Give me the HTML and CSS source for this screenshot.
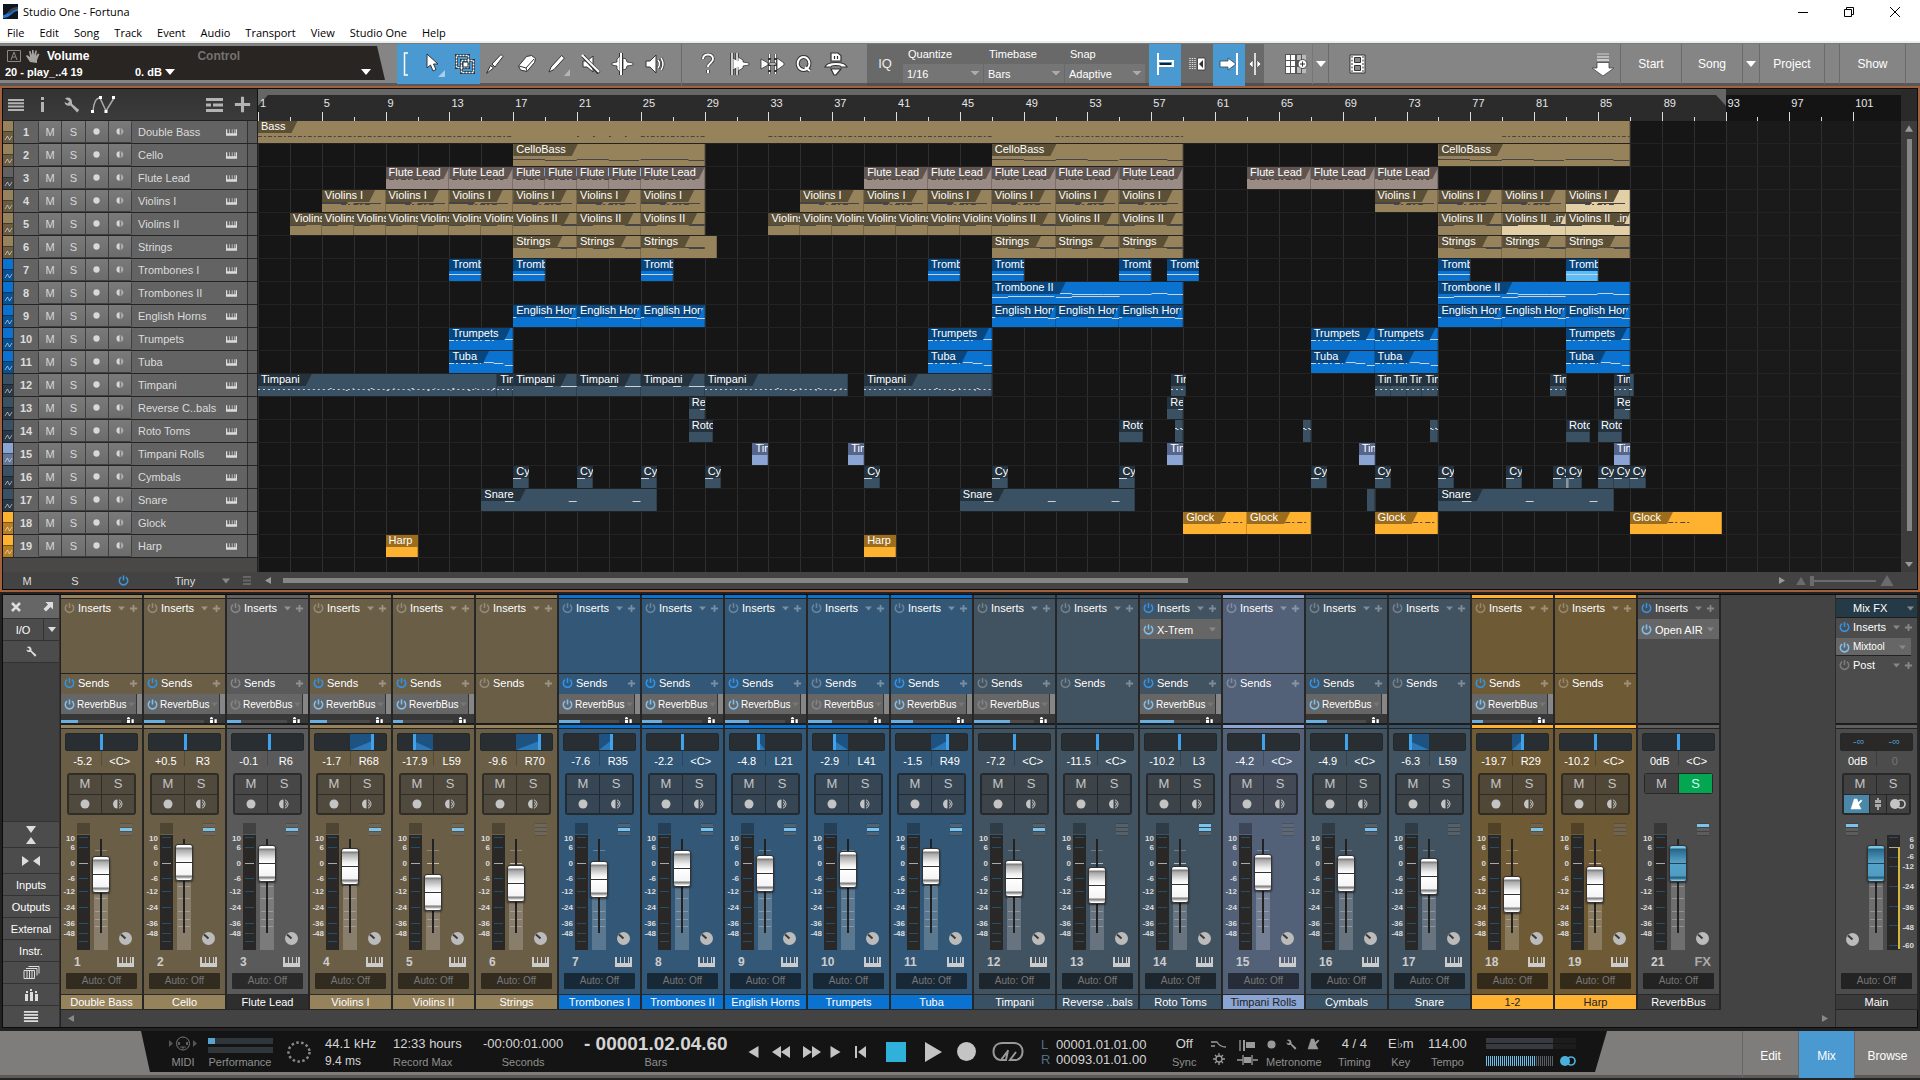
FILE: index.html
```html
<!DOCTYPE html>
<html lang="en">
<head>
<meta charset="utf-8">
<title>Studio One - Fortuna</title>
<link rel="stylesheet" href="styles.css">
</head>
<body>
<svg class="defs" aria-hidden="true">
  <symbol id="power" viewBox="0 0 12 12"><path d="M3.4 2.4a4.6 4.6 0 1 0 5.2 0M6 .5v5.5" fill="none" stroke="currentColor" stroke-width="1.7"/></symbol>
  <symbol id="plus" viewBox="0 0 10 10"><path d="M5 1v8M1 5h8" stroke="currentColor" stroke-width="2"/></symbol>
  <symbol id="down" viewBox="0 0 10 6"><path d="M0 0h10L5 6z" fill="currentColor"/></symbol>
  <symbol id="up" viewBox="0 0 12 10"><path d="M6 0l6 10H0z" fill="currentColor"/></symbol>
  <symbol id="left" viewBox="0 0 10 12"><path d="M10 0v12L0 6z" fill="currentColor"/></symbol>
  <symbol id="right" viewBox="0 0 10 12"><path d="M0 0v12l10-6z" fill="currentColor"/></symbol>
  <symbol id="keys" viewBox="0 0 17 10"><path d="M0 0h2v6h3V0h1v6h3V0h1v6h3V0h1v6h1V0h2v10H0z" fill="currentColor"/></symbol>
  <symbol id="dot" viewBox="0 0 10 10"><circle cx="5" cy="5" r="4.5" fill="currentColor"/></symbol>
  <symbol id="monitor" viewBox="0 0 10 10"><path d="M4.5.5a4.5 4.5 0 0 0 0 9z" fill="currentColor"/><path d="M6 .8a4.4 4.4 0 0 1 0 8.4M6 2.8a2.4 2.4 0 0 1 0 4.4" fill="none" stroke="currentColor"/></symbol>
  <symbol id="wrench" viewBox="0 0 16 16"><path d="M1 1.5C4-.5 8 1 8 5c0 1 0 1.200.2 2l7 6-2 2.500-6.700-7C3 9.500.8 7.500.5 5l3 1.500L5.500 4.500z" fill="currentColor"/></symbol>
  <symbol id="rows" viewBox="0 0 16 12"><path d="M0 0h16v2H0zM0 3.300h16v2H0zM0 6.600h16v2H0zM0 10h16v2H0z" fill="currentColor"/></symbol>
  <symbol id="knob" viewBox="0 0 13 13"><circle cx="6.500" cy="6.500" r="6.500" fill="currentColor"/><path d="M6.500 6.500L2 2.500" stroke="#3d3a36" stroke-width="2"/></symbol>
  <symbol id="zig" viewBox="0 0 9 6"><path d="M1 5L3.500 1l2 4L8 1" fill="none" stroke="currentColor"/></symbol>
  <symbol id="send" viewBox="0 0 10 8"><path d="M2 0h2v1h1v2H1V1h1zM1 4h4v4H1zM7 3h3v5H7z" fill="currentColor"/></symbol>
  <symbol id="metro" viewBox="0 0 14 13"><path d="M4.500 1h3L9 5l3-3 1 1-3.500 4L12 12H1zM4.500 5l4 4" fill="currentColor" stroke="currentColor" stroke-width=".5"/></symbol>
  <symbol id="stereo" viewBox="0 0 16 10"><circle cx="5" cy="5" r="5" fill="currentColor"/><circle cx="11" cy="5" r="4" fill="none" stroke="currentColor" stroke-width="1.700"/></symbol>
</svg>

<header class="window">
  <div class="title">
    <svg class="app-icon" width="15" height="15" viewBox="0 0 15 15"><path fill="#10161d" d="M0 0h15v15H0z"/><path d="M0 11c6 0 5-7 15-7v3C9 7 8 14 0 14z" fill="#2476d2"/><path d="M5 8c3-4 6-5 10-5v2C10 6 8 9 6 10z" fill="#39424d"/></svg>
    <h1>Studio One - Fortuna</h1>
    <div class="window-buttons">
      <button aria-label="Minimize"><svg width="12" height="12" viewBox="0 0 12 12"><path d="M1 6.500h10" stroke="#000"/></svg></button>
      <button aria-label="Restore"><svg width="12" height="12" viewBox="0 0 12 12"><path d="M1.500 3.500h7v7h-7zM3.500 3V1.500h7v7H9" fill="none" stroke="#000"/></svg></button>
      <button aria-label="Close"><svg width="12" height="12" viewBox="0 0 12 12"><path d="M1 1l10 10M11 1L1 11" stroke="#000"/></svg></button>
    </div>
  </div>
  <nav class="menu"><a href="#file">File</a><a href="#edit">Edit</a><a href="#song">Song</a><a href="#track">Track</a><a href="#event">Event</a><a href="#audio">Audio</a><a href="#transport">Transport</a><a href="#view">View</a><a href="#one">Studio One</a><a href="#help">Help</a></nav>
</header>

<section class="toolbar">
  <div class="param">
    <div class="param-line">
      <svg width="14" height="12" viewBox="0 0 14 12"><path d="M.5.500h13v11H.5z" fill="none" stroke="#8c8986"/><path d="M4 10l3-8 3 8M5 7h4" fill="none" stroke="#8c8986"/></svg>
      <svg width="14" height="13" viewBox="0 0 14 13"><path d="M4 12L0 6l1-1 3 2-1-6h1.500L6 5V0h1.500L8 5l1.500-4.500H11L10 6l2-2.500 1.500.5L11 10v3z" fill="#a5a29f"/></svg>
      <b>Volume</b><b class="control">Control</b>
    </div>
    <div class="param-line second"><b>20 - play_..4 19</b><b class="db">0. dB</b><svg width="10" height="6"><use href="#down"/></svg><svg class="end" width="10" height="6"><use href="#down"/></svg></div>
  </div>
  <div class="tools">
    <button class="lit bracket" aria-label="Group"><svg width="6" height="24" viewBox="0 0 6 24"><path d="M5 1H1.500v22H5" fill="none" stroke="#fff" stroke-width="1.500"/></svg></button>
    <button class="lit arrow" aria-label="Arrow"><svg width="22" height="26" viewBox="0 0 22 26"><path d="M4 3v14l3.500-3 2.500 6 3-1.500-2.500-5.500H15z" fill="#fff" stroke="#333"/><path d="M22 19v7h-7z" fill="#a9cdea"/></svg></button>
    <button class="lit wide" aria-label="Range"><svg width="20" height="20" viewBox="0 0 20 20"><path d="M1.500 1.500h12v12h-12zM6.500 6.500h12v12h-12z" fill="none" stroke="#234" stroke-width="3"/><path d="M1.500 1.500h12v12h-12zM6.500 6.500h12v12h-12z" fill="none" stroke="#fff" stroke-width="1.500" stroke-dasharray="2 1"/><path d="M8 8h5v5H8z" fill="#fff" stroke="#234"/></svg></button>
    <button aria-label="Paint"><svg width="20" height="22" viewBox="0 0 20 22"><path d="M1.500 20.500l4-8 3 2.500zM7 11L16 1.500l2 2L10 14z" fill="#fff" stroke="#333"/></svg></button>
    <button aria-label="Eraser"><svg width="20" height="20" viewBox="0 0 20 20"><path d="M1.500 12l8-9.500 5-1 4 3-1 4-7.500 9-6.500-1.500zM2 12l7 2 1 3M9 14l8-9" fill="#fff" stroke="#333"/></svg></button>
    <button aria-label="Pencil"><svg width="24" height="24" viewBox="0 0 24 24"><path d="M2 20l2-5L14.500 3.500l3 2.500L7 17.500z" fill="#fff" stroke="#333"/><path d="M23 17v7h-6z" fill="#b5b5b5"/></svg></button>
    <button aria-label="Mute"><svg width="20" height="20" viewBox="0 0 20 20"><path d="M2 7h4l6-5v16l-6-5H2z" fill="#fff" stroke="#333"/><path d="M2 2l16 17" stroke="#333" stroke-width="4"/><path d="M1 1l17 17" stroke="#fff" stroke-width="2"/></svg></button>
    <button aria-label="Bend"><svg width="24" height="24" viewBox="0 0 24 24"><path d="M10 1v22" stroke="#333" stroke-width="4"/><path d="M1 11l5-1V7l3-3v16l-3-3v-3l-5-1zM12 6l3 1 1 3 6 1v2l-6 1-1 3-3 1z" fill="#fff" stroke="#333" stroke-width=".8"/><path d="M10 1v22" stroke="#fff" stroke-width="2"/></svg></button>
    <button aria-label="Listen"><svg width="21" height="20" viewBox="0 0 21 20"><path d="M1 7h4l6-6v18l-6-6H1z" fill="#fff" stroke="#333"/><path d="M13 6q3 4 0 8M16 4q4 6 0 12" fill="none" stroke="#333" stroke-width="3"/><path d="M13 6q3 4 0 8M16 4q4 6 0 12" fill="none" stroke="#fff" stroke-width="1.500"/></svg></button>
  </div>
  <div class="tools second-tools">
    <button aria-label="Help"><svg width="16" height="22" viewBox="0 0 16 22"><path d="M3 6c0-6 10-6 10 0 0 4-5 4-5 8M8 17v3" fill="none" stroke="#333" stroke-width="3.500"/><path d="M3 6c0-6 10-6 10 0 0 4-5 4-5 8M8 17v3" fill="none" stroke="#fff" stroke-width="2"/></svg></button>
    <button aria-label="Transients"><svg width="20" height="24" viewBox="0 0 20 24"><path d="M2 1v22M7 1v22" stroke="#333" stroke-width="3.500"/><path d="M3 6l5 3V5l5 3v2l6 1v2l-6 1v2l-5 3v-4l-5 3z" fill="#fff" stroke="#333" stroke-width=".8"/><path d="M2 1v22M7 1v22" stroke="#fff" stroke-width="1.500"/></svg></button>
    <button aria-label="Split"><svg width="25" height="22" viewBox="0 0 25 22"><path d="M9.500 1v20M15.500 1v20" stroke="#333" stroke-width="3"/><path d="M9.500 1v20M15.500 1v20" stroke="#fff" stroke-dasharray="4 2" stroke-width="1.500"/><path d="M1 6l7 4v2l-7 4zM9 10h7v2H9zM17 5l7 5v2l-7 5z" fill="#fff" stroke="#333" stroke-width=".8"/></svg></button>
    <button aria-label="Quantize tool"><svg width="18" height="20" viewBox="0 0 18 20"><path d="M8.500 3a5.800 6.500 0 1 0 .1 0M10 13l5 4" fill="none" stroke="#333" stroke-width="4"/><path d="M8.500 3a5.800 6.500 0 1 0 .1 0M10 13l5 4" fill="none" stroke="#fff" stroke-width="2"/></svg></button>
    <button aria-label="Macro"><svg width="24" height="24" viewBox="0 0 24 24"><path d="M7 1h7l3 2.500V9H7zM10.500 4v3M13.500 4v3M1 15c2-6 20-6 22 0h-6c0-2-10-2-10 0zM7 17h10l-5 6h-2z" fill="#fff" stroke="#333" stroke-width="1.200"/></svg></button>
  </div>
  <div class="quantize">
    <button class="iq">IQ</button>
    <div class="field"><label for="q">Quantize</label><select id="q"><option>1/16</option></select></div>
    <div class="field"><label for="tb">Timebase</label><select id="tb"><option>Bars</option></select></div>
    <div class="field"><label for="sn">Snap</label><select id="sn"><option>Adaptive</option></select></div>
    <button class="lit sq first" aria-label="Snap to grid"><svg width="18" height="24" viewBox="0 0 18 24"><path d="M2 1v22M2 9h15v5H2" fill="none" stroke="#fff" stroke-width="2"/><path d="M4 11h11v2H4z" fill="#123"/></svg></button>
    <button class="sq" aria-label="Autoscroll"><svg width="18" height="14" viewBox="0 0 18 14"><path d="M2 1v12M4.500 1v12M7 1v12" stroke="#ddd" stroke-dasharray="1 1" stroke-width="1.500"/><path d="M9.500 1H17v12H9.500z" fill="#fff" stroke="#333" stroke-width=".8"/><path d="M15 3v8l-4-4z" fill="#333"/></svg></button>
    <button class="lit sq" aria-label="Follow"><svg width="20" height="24" viewBox="0 0 20 24"><path d="M1 9h8V6l8 6-8 6v-3H1z" fill="#fff" stroke="#345" stroke-width=".8"/><path d="M18 1v22" stroke="#fff" stroke-width="2"/></svg></button>
    <button class="cursor" aria-label="Cursor"><svg width="14" height="24" viewBox="0 0 14 24"><path d="M7 1v22" stroke="#fff" stroke-width="1.500"/><path d="M5 8v8l-4-4zM9 8v8l4-4z" fill="#fff" stroke="#333" stroke-width=".5"/></svg></button>
  </div>
  <div class="views">
    <button aria-label="Add grid"><svg width="23" height="20" viewBox="0 0 23 20"><path d="M0 0h17v20H0z" fill="#555"/><path d="M1 1h4v5H1zM6 1h4v5H6zM1 7h4v5H1zM6 7h4v5H6zM1 13h4v6H1zM6 13h4v6H6z" fill="#fff"/><path d="M12 1h4v5h-4zM17 1h4v5h-4zM12 13h4v6h-4zM17 15h4v4h-4z" fill="#bbb"/><circle cx="17.500" cy="10" r="4.500" fill="#fff" stroke="#444"/><path d="M17.500 7.500v5M15 10h5" stroke="#333"/></svg></button>
    <button class="drop" aria-label="Grid menu"><svg width="10" height="6"><use href="#down"/></svg></button>
    <button class="film" aria-label="Video"><svg width="17" height="20" viewBox="0 0 17 20"><path d="M1 1h15v18H1z" fill="#fff" stroke="#333"/><path d="M3 2v16M14 2v16" stroke="#333" stroke-dasharray="2 1.500"/><path d="M5.500 3.500h6v5h-6zM5.500 11.500h6v5h-6z" fill="#888" stroke="#333"/></svg></button>
  </div>
  <div class="pages">
    <button class="collect" aria-label="Install"><svg width="24" height="25" viewBox="0 0 24 25"><path d="M6 1h12v2H6z" fill="#aaa"/><path d="M6 4h12v2H6z" fill="#bbb"/><path d="M6 7h12v2H6z" fill="#ccc"/><path d="M6 10.500h12V16h5L12 24 1 16h5z" fill="#fff" stroke="#444" stroke-width=".8"/></svg></button>
    <button class="start">Start</button><button class="start">Song</button><button class="tiny" aria-label="Songs"><svg width="10" height="6"><use href="#down"/></svg></button><button class="start">Project</button><span class="blank"></span><button class="show">Show</button><span class="blank"></span>
  </div>
</section>

<main>
<section class="arrange">
  <div class="arrange-in">
  <div class="arrange-head">
    <div class="list-tools">
      <svg width="16" height="12"><use href="#rows"/></svg>
      <svg class="i" width="6" height="15" viewBox="0 0 6 15"><path d="M1 0h3v3H1zM1 5h3v10H1z" fill="currentColor"/></svg>
      <svg class="w" width="16" height="16"><use href="#wrench"/></svg>
      <svg width="25" height="18" viewBox="0 0 25 18"><path d="M2 15q1-12 6-13h1l6 13L23 2" fill="none" stroke="#aaa" stroke-width="1.500"/><path d="M0 14h3v3H0zM8 0h3v3H8zM13.500 14h3v3h-3zM21 0h3v3h-3z" fill="#fff"/></svg>
      <svg class="push" width="17" height="14" viewBox="0 0 17 14"><path d="M0 0h17v3H0zM0 5.500h5v3H0zM7 5.500h10v3H7zM0 11h17v3H0z" fill="currentColor"/></svg>
      <svg width="17" height="17" viewBox="0 0 10 10"><path d="M5 .5v9M.5 5h9" stroke="currentColor" stroke-width="1.800"/></svg>
    </div>
    <div class="ruler" id="ruler"></div>
  </div>
  <div class="arrange-body">
    <div class="track-list" id="tracks"></div>
    <div class="lanes" id="lanes"></div>
    <div class="vscroll"><svg width="8" height="7"><use href="#up"/></svg><span></span><svg width="8" height="7"><use href="#down"/></svg></div>
  </div>
  <div class="arrange-foot">
    <div class="foot-list"><button>M</button><button>S</button><button class="on" aria-label="Power"><svg width="11" height="11"><use href="#power"/></svg></button><button class="size">Tiny</button><svg class="dd" width="8" height="6"><use href="#down"/></svg><svg class="lines" width="8" height="9" viewBox="0 0 8 9"><path d="M0 0h8v2H0zM0 3.500h8v2H0zM0 7h8v2H0z" fill="currentColor"/></svg></div>
    <div class="hscroll"><svg width="6" height="9"><use href="#left"/></svg><span class="rail"><span></span></span><svg width="6" height="9"><use href="#right"/></svg></div>
    <div class="zoomer"><svg width="10" height="8"><use href="#up"/></svg><span class="zoom-rail"></span><svg width="14" height="11"><use href="#up"/></svg></div>
  </div>
  </div>
</section>

<section class="mixer">
  <aside class="mix-side">
    <div class="side-top"><svg width="10" height="10" viewBox="0 0 10 10"><path d="M1 1l8 8M9 1L1 9" stroke="currentColor" stroke-width="2.500"/></svg><svg width="10" height="10" viewBox="0 0 10 10"><path d="M2.500 0H10v7.500L7.500 5 3 9.500.5 7 5 2.500z" fill="currentColor"/></svg></div>
    <div class="side-io"><button>I/O</button><button aria-label="I/O menu"><svg width="8" height="5"><use href="#down"/></svg></button></div>
    <button aria-label="Options"><svg width="11" height="11"><use href="#wrench"/></svg></button>
    <div class="side-gap"></div>
    <button class="tall" aria-label="Height"><svg width="10" height="18" viewBox="0 0 10 18"><path d="M0 0h10L5 7zM0 18h10l-5-7z" fill="currentColor"/></svg></button>
    <button class="tall" aria-label="Width"><svg width="18" height="10" viewBox="0 0 18 10"><path d="M0 0v10l7-5zM18 0v10l-7-5z" fill="currentColor"/></svg></button>
    <button>Inputs</button><button>Outputs</button><button>External</button><button>Instr.</button>
    <button aria-label="Banks"><svg width="17" height="13" viewBox="0 0 17 13"><path d="M1 4.500h10.500v8H1zM3 2.500h11v7M5.500.5H16v7M4 5v7M6.500 5v7M9 5v7" fill="none" stroke="currentColor"/></svg></button>
    <button aria-label="Groups"><svg width="13" height="12" viewBox="0 0 13 12"><path d="M1 2h2v2H1zM0 5h3v7H0zM5 0h2v2H5zM5 3h3v9H5zM10 2h2v2h-2zM10 5h3v7h-3z" fill="currentColor"/></svg></button>
    <button aria-label="List"><svg width="16" height="11" viewBox="0 0 16 12"><use href="#rows"/></svg></button>
  </aside>
  <div class="mix-center">
    <div class="strips" id="strips"></div>
    <div class="mix-scroll"><svg width="6" height="9"><use href="#left"/></svg><svg width="6" height="9"><use href="#right"/></svg></div>
  </div>
  <div class="mix-main" id="mainout"></div>
</section>
</main>

<footer class="transport">
  <div class="panel">
    <div class="cell midi"><svg width="28" height="15" viewBox="0 0 28 15"><path d="M0 4v7l4-3.500zM24 4v7l4-3.500z" fill="#555"/><circle cx="14" cy="7.500" r="6.500" fill="none" stroke="#777"/><path d="M10 6v3M12 10.500v1M14 10.500v2M16 10.500v1M18 6v3" stroke="#777" stroke-width="1.500"/></svg><small>MIDI</small></div>
    <div class="cell perf"><span class="meterbar used"></span><span class="meterbar"></span><small>Performance</small></div>
    <svg class="spinner" width="26" height="24" viewBox="0 0 26 24"><ellipse cx="13" cy="12" rx="10.500" ry="9.500" fill="none" stroke="#888" stroke-width="2.500" stroke-dasharray="2.500 2.400"/></svg>
    <div class="cell start-al"><span>44.1 kHz</span><span class="sm">9.4 ms</span></div>
    <div class="cell start-al"><span>12:33 hours</span><small>Record Max</small></div>
    <div class="cell sec"><span>-00:00:01.000</span><small>Seconds</small></div>
    <div class="cell bars"><b>- 00001.02.04.60</b><small>Bars</small></div>
    <div class="keys">
      <button aria-label="Previous marker"><svg width="11" height="12"><use href="#left"/></svg></button>
      <button aria-label="Rewind"><svg width="18" height="12" viewBox="0 0 18 12"><path d="M9 0v12L0 6zM18 0v12L9 6z" fill="currentColor"/></svg></button>
      <button aria-label="Forward"><svg width="18" height="12" viewBox="0 0 18 12"><path d="M0 0v12l9-6zM9 0v12l9-6z" fill="currentColor"/></svg></button>
      <button aria-label="Next marker"><svg width="11" height="12"><use href="#right"/></svg></button>
      <button aria-label="Return to zero"><svg width="11" height="12" viewBox="0 0 11 12"><path d="M0 0h2v12H0zM11 0v12L3 6z" fill="currentColor"/></svg></button>
      <button aria-label="Stop" class="stop"></button>
      <button aria-label="Play"><svg width="17" height="20" viewBox="0 0 17 20"><path d="M0 0l17 10L0 20z" fill="currentColor"/></svg></button>
      <button aria-label="Record"><svg width="21" height="21"><use href="#dot"/></svg></button>
      <button aria-label="Loop"><svg width="32" height="20" viewBox="0 0 32 20"><path d="M8 18C-1 17-1 1 10 1h12c11 0 11 16 2 17h-6l6-8M16 8l-2 10H9l6-8" fill="none" stroke="#999" stroke-width="2"/></svg></button>
    </div>
    <div class="locators"><span><i>L</i>00001.01.01.00</span><span><i>R</i>00093.01.01.00</span></div>
    <div class="cell"><span>Off</span><small>Sync</small></div>
    <svg width="48" height="26" viewBox="0 0 48 26"><g fill="none" stroke="#9a9a9a" stroke-width="1.300"><path d="M1 3h6q3 5 9 5M1 7h4M30 1v11M36 6h9M27 21h6M43 21h6M33 16v10M42 16v10"/><circle cx="9" cy="20" r="3"/><path d="M9 14v3M9 23v3M3 20h3M12 20h3M5 16l2 2M11 22l2 2M13 16l-2 2M7 22l-2 2"/></g><path d="M33 1h2v11h-2zM36 3h9v6h-9zM34 18h7v6h-7z" fill="#9a9a9a"/></svg>
    <div class="cell metron"><span><svg width="9" height="9"><use href="#dot"/></svg><svg width="11" height="11"><use href="#wrench"/></svg><svg width="13" height="12"><use href="#metro"/></svg></span><small>Metronome</small></div>
    <div class="cell"><span>4 / 4</span><small>Timing</small></div>
    <div class="cell"><span>E♭m</span><small>Key</small></div>
    <div class="cell"><span>114.00</span><small>Tempo</small></div>
    <div class="output"><span class="lvl"></span><span class="lvl"></span><span class="vol"><i></i><svg width="16" height="10"><use href="#stereo"/></svg></span></div>
  </div>
  <div class="modes"><button>Edit</button><button class="lit">Mix</button><button class="browse">Browse</button></div>
</footer>
<script src="app.js"></script>
</body>
</html>
```
FILE: styles.css
```css
* { box-sizing: border-box; }
body { margin: 0; background: #222; color: #fff; font: 11px/14px "Liberation Sans", Arial, sans-serif; min-height: 100vh; overflow: hidden; }
button, select, input { font: inherit; color: inherit; margin: 0; padding: 0; border: 0; background: none; border-radius: 0; }
button { display: flex; align-items: center; justify-content: center; }
svg { display: block; flex: none; }
.defs { position: absolute; width: 0; height: 0; }
.lit { background: #4a99d0; }

.window { background: #fff; color: #000; border-bottom: 2px solid #e9edeb; font: 11px/16px "Open Sans", "Noto Sans", sans-serif; }
.title { display: flex; align-items: center; height: 23px; padding-left: 3px; gap: 5px; }
.title h1 { margin: 0; font: inherit; }
.window-buttons { margin-left: auto; display: flex; padding-right: 2px; }
.window-buttons button { width: 46px; height: 20px; }
.menu { display: flex; height: 18px; gap: 15px; padding: 2px 0 0 7px; align-items: center; line-height: 16px; }
.menu a { color: inherit; text-decoration: none; }

.toolbar { display: flex; height: 43px; background: linear-gradient(#858585 39px, #585858 39px, #585858 42px, #151515 42px); border-top: 1px solid #777b79; }
.param { width: 385px; height: 34px; margin-top: 2px; padding: 2px 14px 0 5px; background: #292523; clip-path: polygon(0 0, 377px 0, 100% 100%, 0 100%); }
.param-line { display: flex; align-items: center; height: 16px; gap: 5px; padding-left: 2px; font-size: 12px; }
.param-line b:first-of-type { margin-left: 2px; }
.param-line .control { margin-left: 103px; color: #77736f; }
.second { font-size: 11px; padding: 0; gap: 3px; }
.second b:first-of-type { margin: 0; width: 127px; }
.second .end { margin-left: auto; }
.tools { display: flex; margin-left: 12px; height: 42px; padding-bottom: 2px; }
.tools button { width: 32px; }
.tools .bracket { width: 18px; }
.tools .arrow { padding-left: 6px; }
.tools .wide { width: 33px; margin-right: -1px; padding-left: 2px; }
.second-tools { margin-left: 10px; padding-left: 10px; border-left: 1px solid #6b6b6b; width: 186px; justify-content: space-between; padding-right: 15px; }
.quantize { display: flex; background: #696969; height: 42px; border-bottom: 3px solid #505050; width: 397px; }
.quantize .iq { width: 36px; font-size: 13px; color: #eee; }
.field { width: 81px; padding-top: 3px; display: flex; flex-direction: column; justify-content: space-between; }
.field label { padding-left: 5px; }
.field select { appearance: none; width: 80px; height: 19px; padding-left: 4px; background: #757575 conic-gradient(from -39deg at 50% 100%, #aaa 78deg, transparent 0) 68px 7px/8px 5px no-repeat; }
.quantize .sq { width: 32px; height: 42px; padding-bottom: 3px; }
.quantize .first { margin-left: 3px; }
.quantize .cursor { width: 19px; }
.views, .pages { display: flex; height: 42px; padding-bottom: 2px; }
.views button { width: 48px; padding-left: 16px; }
.views .drop { width: 17px; padding: 0; border-right: 1px solid #6b6b6b; border-left: 1px solid #777; }
.views .film { width: 54px; padding-left: 2px; }
.pages { margin-left: auto; font-size: 12px; }
.pages button, .pages .blank { border-left: 1px solid #6b6b6b; }
.pages .collect { border: 0; width: 34px; }
.pages .start { width: 61px; }
.pages .tiny { width: 17px; }
.pages .tiny + .start { width: 65px; }
.pages .blank { width: 15px; }
.pages .show { width: 66px; }

.arrange { border: 2px solid #a3603f; background: #0d0d0d; }
.arrange-in { border: 1px solid #0d0d0d; }
.arrange-head, .arrange-body, .arrange-foot { display: flex; }
.arrange-head { height: 32px; background: #2a2a2a; padding-right: 16px; }
.list-tools { width: 255px; flex: none; display: flex; align-items: center; padding: 0 6px 0 5px; gap: 11px; color: #b3b3b3; background: linear-gradient(#333, #3b3b3b); border-right: 1px solid #111; border-bottom: 1px solid #222; }
.list-tools .i { margin-left: 5px; }
.list-tools .w { margin-left: 7px; }
.list-tools .push { margin-left: auto; }
.ruler { position: relative; flex: 1; background: linear-gradient(#2c2c2c 6px, #141414 6px); }
.loop { position: absolute; left: 0; top: 0; bottom: 0; background: linear-gradient(#666 6px, #2b2b2b 6px); }
.loop::before, .loop::after { content: ""; position: absolute; top: 6px; border-top: 11px solid #666; }
.loop::before { left: 0; border-right: 10px solid transparent; }
.loop::after { right: 0; border-left: 10px solid transparent; }
.tick { position: absolute; bottom: 0; height: 4px; border-left: 1px solid #ddd; padding-left: 1px; line-height: 12px; color: #e6e6e6; }
.tick.major { height: 9px; }
.tick span { position: relative; display: block; margin-top: -15px; }
.arrange-body { height: 451px; background: #161616; }
.track-list { width: 255px; flex: none; background: #494847; border-right: 1px solid #222; }
.track { display: grid; grid-template-columns: 10px 25px 94px 1fr 12px 9px 10px; height: 23px; border-bottom: 1px solid #242424; align-items: center; background: #636363; color: #dcdcdc; }
.track .chip { height: 22px; display: grid; grid-template-rows: 10px 12px; background: var(--c); color: #ffffff88; }
.track .chip span { background: #00000048; border-top: 1px solid #0005; display: grid; place-items: center; }
.track b { text-align: center; border-left: 1px solid #333; line-height: 22px; }
.track-buttons { display: grid; grid-template-columns: repeat(4, 1fr); height: 22px; background: #3f3f3f; gap: 1px; padding: 0 1px 1px; border-radius: 2px; }
.track-buttons button { background: linear-gradient(#7a7a7a, #6c6c6c); color: #d8d8d8; }
.track .name { padding-left: 6px; white-space: nowrap; }
.track .edge { height: 22px; border-left: 1px solid #333; background: #5c5c5c; grid-column: 7; }
.lanes { position: relative; flex: 1; overflow: hidden; }
.after { position: absolute; top: 0; bottom: 0; right: 0; background: #1a1a1a; }
.gline { position: absolute; top: 0; bottom: 0; border-left: 1px solid #2f2f2f; }
.lane { position: relative; height: 23px; border-bottom: 1px solid #232323; }
.clip { position: absolute; top: 0; height: 22px; overflow: hidden; background: var(--c); color: #fff; box-shadow: inset -1px 0 #0003; }
.clip svg { position: absolute; left: 0; top: 0; width: 100%; height: 22px; }
.clip .lab { position: relative; display: block; width: max-content; max-width: 100%; overflow: hidden; height: 12px; line-height: 11px; padding: 0 12px 0 3px; white-space: nowrap; background: var(--d); clip-path: polygon(0 0, 100% 0, calc(100% - 6px) 100%, 0 100%); }
.clip.short .lab { width: 100%; padding-right: 0; clip-path: none; }
.clip.glow { background: #8797a4; top: 12px; height: 10px; }
.vscroll { width: 16px; background: #3c3c3c; display: flex; flex-direction: column; align-items: center; padding: 4px 0; gap: 7px; color: #999; }
.vscroll span { width: 5px; height: 392px; background: #868686; }
.vscroll svg:last-child { margin-top: auto; }
.arrange-foot { height: 17px; background: #434343; align-items: center; color: #ddd; }
.foot-list { width: 255px; display: flex; align-items: center; color: #ddd; }
.foot-list button { width: 48px; }
.foot-list .on { color: #3a96dc; width: 49px; }
.foot-list .size { width: 74px; }
.foot-list .dd { color: #888; }
.foot-list .lines { margin-left: 13px; color: #666; }
.hscroll { flex: 1; display: flex; align-items: center; gap: 12px; padding-left: 7px; color: #999; }
.rail { flex: 1; }
.rail span { display: block; width: 61%; height: 5px; background: #868686; }
.zoomer { width: 132px; display: flex; align-items: center; gap: 4px; padding-left: 11px; color: #6a6a70; }
.zoom-rail { width: 66px; height: 10px; background: linear-gradient(#6a6a70, #6a6a70) 0 0/4px 10px no-repeat, linear-gradient(#6a6a70, #6a6a70) 0 4px/66px 2px no-repeat; }

.mixer { margin: 2px 2px 0; border: 1px solid #0c0c0c; background: #434343; display: flex; height: 434px; }
.mix-side { width: 58px; flex: none; padding-right: 1px; border-right: 1px solid #222; display: flex; flex-direction: column; gap: 1px; background: #333; }
.mix-side button { height: 21px; background: #4c4c4c; color: #ddd; font-size: 11px; }
.mix-side button:not([aria-label]) { color: #fff; }
.side-top { display: flex; align-items: center; justify-content: space-between; padding: 0 6px 0 8px; height: 23px; background: #666; color: #ddd; }
.side-io { display: grid; grid-template-columns: 40px 1fr; gap: 1px; }
.side-gap { flex: 1; background: #404040; }
.mix-side .tall { height: 25px; }
.mix-center { flex: 1; min-width: 0; display: flex; flex-direction: column; border-right: 1px solid #2a2a2a; }
.strips { display: flex; gap: 2px; }
.mix-scroll { flex: 1; display: flex; align-items: center; justify-content: space-between; padding: 0 7px; color: #888; }
.mix-main { width: 81px; flex: none; }
.strip { width: 81px; flex: none; background: var(--bg); border-bottom: 1px solid #262626; box-shadow: 2px 0 #262626; font-size: 11px; }
.cap { height: 4px; background: var(--c); border-bottom: 1px solid #222; }
.ins { height: 75px; border-bottom: 1px solid #222; }
.snd { height: 51px; border-bottom: 2px solid #1c1c1c; overflow: hidden; }
.ins.full { height: 126px; border-bottom: 2px solid #1c1c1c; }
.rowh { display: flex; align-items: center; height: 20px; padding: 0 4px 2px 3px; gap: 3px; }
.rowh .pw { color: #fff4; }
.rowh .pw.on { color: #2f93ea; }
.rowh svg:not(.pw) { color: #fff5; }
.rowh svg.pl { margin-left: 1px; }
.rowh .dn { margin-left: auto; }
.rowh .pl.only { margin-left: auto; }
.slot { display: flex; align-items: center; height: 20px; padding: 1px 5px 0 3px; gap: 3px; background: #666; white-space: nowrap; }
.slot .pw { color: #fff3; }
.slot .pw.on { color: #7cc0f2; }
.slot .dn { margin-left: auto; color: #888; }
.bus { display: flex; background: #333; justify-content: space-between; height: 20px; }
.bus .slot { width: 75px; font-size: 10px; gap: 2px; overflow: hidden; }
.bus .slot .dn { color: #777; }
.bus .sb { width: 5px; background: #868686; }
.lev { background: #383838; height: 9px; display: flex; align-items: flex-end; gap: 4px; }
.lev .bar { width: 60px; height: 3px; background: #4c4c4c; }
.lev .bar span { display: block; height: 3px; background: #69aede; }
.lev svg { height: 6px; }
.low { height: 265px; padding: 4px 4px 0; }
.pan { width: 73px; height: 18px; background: #292e32; border: 1px solid #23282b; border-radius: 2px; }
.vals { display: grid; grid-template-columns: 1fr 1fr; height: 20px; line-height: 20px; text-align: center; }
.vals span:first-child { border-right: 1px solid #0003; height: 15px; }
.btns { display: grid; grid-template-columns: 1fr 1fr; grid-auto-rows: 1fr; gap: 1px; margin: 2px 2px 9px; padding: 2px; height: 42px; background: color-mix(in srgb, var(--bg) 25%, #1c1c1c); border-radius: 3px; }
.btns button { background: color-mix(in srgb, var(--bg) 45%, #383838); color: #c4c4c4; font-size: 13px; }
.btns.solo { height: 21px; margin-bottom: 30px; padding: 1px; }
.btns .green { background: #05a651; color: #cfe; }
.fader { display: grid; grid-template-columns: 14px 13px 18px 1fr; column-gap: 2px; height: 127px; margin: -1px 0 0 -4px; }
.scale { display: grid; grid-template-rows: 9px 16px 15px 13px 16px 16px 10px 10px; padding-top: 11px; font-weight: bold; font-size: 8px; line-height: 9px; text-align: right; color: #ddd; }
.slider { display: grid; }
.slider > * { grid-area: 1 / 1; }
.slider input { appearance: none; writing-mode: vertical-lr; direction: rtl; width: 18px; height: 127px; background: none; }
.slider input::-webkit-slider-runnable-track { width: 18px; height: 127px; }
.slider input::-webkit-slider-thumb { appearance: none; width: 18px; height: 37px; border: 1px solid #333; border-radius: 3px; background: linear-gradient(#fff 2px, #777 3px, #aaa 5px, #eee 13px, #fff 17px, #333 17px, #333 18px, #fff 18px, #f4f4f4 30px, #777 31px, #bbb 33px, #fff 34px); box-shadow: 0 1px 2px #000a; }
.slider.blue input::-webkit-slider-thumb { background: linear-gradient(#7cc4e4 2px, #24617f 3px, #2f6f92 5px, #4a93b8 13px, #56a3c9 17px, #1f4256 17px, #1f4256 18px, #56a3c9 18px, #4f9bc1 30px, #28607c 31px, #357a9c 33px, #7cc4e4 34px); }
.aside { display: flex; flex-direction: column; justify-content: space-between; align-items: flex-end; padding: 0 6px 5px 0; color: #bbb; }
.num { display: flex; align-items: center; justify-content: space-between; height: 23px; padding: 0 4px 0 9px; color: #ccc; }
.num b { font-size: 12px; }
.num .fx { color: #aaa; font-size: 13px; }
.auto { width: 71px; height: 16px; margin-left: 1px; background: #0008; color: #777; font-size: 10px; border-radius: 1px; }
.sname { height: 15px; border-top: 1px solid #2a2a2a; line-height: 14px; text-align: center; background: var(--n, var(--c)); color: var(--t, #fff); white-space: nowrap; }
.mixfx { display: flex; align-items: center; height: 19px; padding: 0 3px 0 17px; justify-content: space-between; background: #253a47; border-bottom: 1px solid #1c1c1c; }
.mixfx svg { color: #888; }
.mix-main .slot { height: 18px; width: 75px; border-bottom: 1px solid #222; font-size: 10px; }
.mix-main .pan { background: #2b2928; display: grid; grid-template-columns: 1fr 1fr; color: #4a93c0; text-align: center; }
.mix-main .trio { grid-column: 1 / 3; display: grid; grid-template-columns: 25px 16px 1fr; gap: 1px; }
.mix-main .btns .metro { background: #4b87a8; color: #fff; }
.mix-main .fader { grid-template-columns: 29px 18px 13px 1fr; }
.mix-main .aside { align-items: flex-start; padding-left: 10px; }
.mix-main .scale { grid-template-rows: 7px 10px 10px 20px 21px 20px 18px 10px; padding: 12px 1px 0 0; }
.mix-main .low { padding-right: 2px; }
.mix-main .vals { width: 73px; }
.mix-main .btns { width: 69px; }
.dim { color: #777; }

.transport { display: flex; height: 49px; margin-top: 3px; background: linear-gradient(#7f7d7b 44px, #5c5b5a 44px, #5c5b5a 47px, #242424 47px); }
.panel { flex: 1; margin-left: 141px; height: 41px; padding: 0 0 0 24px; background: #141414; clip-path: polygon(0 0, 100% 0, calc(100% - 12px) 100%, 9px 100%); display: grid; grid-template-columns: 41px 80px 39px 68px 87px 104px 161px 296px 131px 38px 56px 72px 50px 40px 58px 1fr; align-items: center; color: #d5d5d5; font-size: 13px; }
.cell { display: flex; flex-direction: column; align-items: center; justify-content: space-between; height: 35px; width: max-content; line-height: 16px; padding-top: 2px; }
.cell small { font-size: 11px; line-height: 14px; color: #8f8f8f; }
.start-al { align-items: flex-start; }
.cell .sm { font-size: 12px; }
.midi { margin-left: 4px; }
.perf { width: 68px; gap: 1px; padding-top: 4px; }
.perf small { font-size: 11px; }
.meterbar { width: 65px; height: 6px; background: #31363a; }
.used { background: linear-gradient(90deg, #57a4d0 7px, #31363a 7px); }
.bars b { font-size: 19px; }
.sec { margin-left: 3px; }
.keys { display: grid; grid-template-columns: 24px 31px 27px 25px 31px 39px 31px 36px 32px; align-items: center; color: #c4c4c4; padding-left: 3px; }
.keys button { justify-content: flex-start; }
.keys .stop { width: 20px; height: 20px; background: #2fb1da; }
.locators { display: grid; line-height: 15px; }
.locators i { font-style: normal; display: inline-block; width: 15px; color: #4d6f8a; }
.metron span { display: flex; gap: 10px; align-items: center; height: 16px; color: #999; }
.output { display: grid; width: 90px; gap: 1px; }
.lvl { height: 5px; background: linear-gradient(90deg, #373a40 67px, #1d1d1d 67px); }
.vol { display: flex; gap: 7px; padding-top: 6px; color: #4bb0da; }
.vol i { width: 67px; height: 10px; background: repeating-linear-gradient(90deg, transparent 0 1px, #141414 1px 2px), linear-gradient(90deg, #6cc0ea 50px, #5a5f66 50px); }
.modes { display: flex; margin-left: 135px; height: 47px; font-size: 12px; }
.modes button { width: 56px; border-left: 1px solid #666; padding-top: 2px; }
.modes .browse { width: 66px; }
```
FILE: app.js
```js
const BARS = 103;
const pct = bars => `${(bars * 100 / BARS).toFixed(3)}%`;
const icon = (id, w, h, cls = '') => `<svg class="${cls}" width="${w}" height="${h}"><use href="#${id}"/></svg>`;

const PALETTE = {
  tan: { c: '#96825b', d: '#5b4f36', bg: '#6b5e46' },
  mauve: { c: '#9b8b85', d: '#5f5450' },
  gray: { c: '#616161', bg: '#5a5a5b', n: '#2e2e2e' },
  blue: { c: '#0a72d0', d: '#08467f', bg: '#335776' },
  steel: { c: '#3a5063', d: '#24323e', bg: '#415260' },
  lav: { c: '#8aa5d4', d: '#55668a', bg: '#526078', t: '#222' },
  gold: { c: '#ffb130', d: '#9c6d1d', bg: '#6f5a36', t: '#222' },
  fx: { c: '#5e5e5e', bg: '#4c4c4c', n: '#3a3a3a' }
};

const run = (from, to, step) => {
  const out = [];
  for (let b = from; b < to; b += step) out.push([b, b + step]);
  return out;
};

/* clips: [start bar, end bar, flag]; notes: [from bar, to bar, y, dash style], relative to the clip */
const TRACKS = [
  { name: 'Double Bass', color: 'tan', label: 'Bass', clips: [[1, 87]], notes: [[0, 16, 15, 1], [20, 24, 15, 4], [24, 28, 15, 1], [32, 46, 15, 1], [50, 58, 15, 1], [78, 86, 15, 1]] },
  { name: 'Cello', color: 'tan', label: 'CelloBass', clips: [[17, 29], [47, 59], [75, 87]], notes: [[0, 2, 15], [2, 4, 16], [4, 6, 15], [6, 7.9, 16], [8, 11, 15], [11, 12, 16]] },
  { name: 'Flute Lead', color: 'mauve', strip: 'gray', label: 'Flute Lead', clips: [...run(9, 17, 4), ...run(17, 25, 2), [25, 29], ...run(39, 59, 4), ...run(63, 75, 4)], notes: [[0.2, 3.4, 12, 3]] },
  { name: 'Violins I', color: 'tan', label: 'Violins I', clips: [...run(5, 29, 4), ...run(35, 59, 4), ...run(71, 83, 4), [83, 87, 'hi']], notes: [[0, 1.6, 12], [0, 1.6, 13], [1.2, 3, 14, 3], [2, 3.7, 13]] },
  { name: 'Violins II', color: 'tan', label: 'Violins II', clips: [...run(3, 17, 2), ...run(17, 29, 4), ...run(33, 47, 2), ...run(47, 59, 4), [75, 79], [79, 83, 'hi'], [83, 87, 'hi']], notes: [[3, 4, 12], [3, 4, 11], [0, 1, 12]] },
  { name: 'Strings', color: 'tan', label: 'Strings', clips: [[17, 21], [21, 25], [25, 29.75], ...run(47, 59, 4), ...run(75, 87, 4)], notes: [[3, 4, 12], [2.7, 4, 11], [1, 2, 12]] },
  { name: 'Trombones I', color: 'blue', label: 'Tromb', clips: [[13, 15], [17, 19], [25, 27], [43, 45], [47, 49], [55, 57], [58, 60], [75, 77], [83, 85, 'hi']], notes: [[0, 2, 15]] },
  { name: 'Trombones II', color: 'blue', label: 'Trombone II', clips: [[47, 59], [75, 87]], notes: [[0, 1, 15], [1, 3.9, 14], [4, 5, 15], [4, 5, 11], [5, 7, 12], [5, 8, 14], [7, 10, 12], [10, 11, 11], [11, 12, 12]] },
  { name: 'English Horns', color: 'blue', label: 'English Horns', clips: [...run(17, 29, 4), ...run(47, 59, 4), ...run(75, 87, 4)], notes: [[0, 0.2, 12], [2, 3.5, 12], [3.5, 4, 13]] },
  { name: 'Trumpets', color: 'blue', label: 'Trumpets', clips: [[13, 17], [43, 47], [67, 71], [71, 75], [83, 87]], notes: [[0, 3, 12, 3], [3.4, 4, 11]] },
  { name: 'Tuba', color: 'blue', label: 'Tuba', clips: [[13, 17], [43, 47], [67, 71], [71, 75], [83, 87]], notes: [[0, 2, 12, 3], [2.2, 2.8, 11], [2.8, 3.4, 12], [3.5, 4, 14]] },
  { name: 'Timpani', color: 'steel', label: 'Timpani', clips: [[1, 16], [16, 17], [17, 21, 'roll'], [21, 25, 'roll'], [25, 29, 'roll'], [29, 38], [39, 47], [58.25, 59.2], ...run(71, 75, 1), [82, 83], [86, 87], [87, 87.25, 'bare']], notes: [[0, 15, 15, 2], [4.5, 15, 14, 5], [5.5, 15, 16, 5]] },
  { name: 'Reverse C..bals', stripName: 'Reverse ..bals', color: 'steel', label: 'Rev', clips: [[28, 29], [58, 59], [86, 87]], notes: [[0.7, 1, 12]] },
  { name: 'Roto Toms', color: 'steel', label: 'Roto', clips: [[28, 29.5], [55, 56.5], [58.5, 59, 'bare'], [66.5, 67, 'bare'], [74.5, 75, 'bare'], [83, 84.5], [85, 86.5]], notes: [[0, 0.5, 8, 2], [0.1, 0.5, 9, 2]] },
  { name: 'Timpani Rolls', color: 'lav', label: 'Tim', clips: [[32, 33], [38, 39], [58, 59], [70, 71], [86, 87]], notes: [] },
  { name: 'Cymbals', color: 'steel', label: 'Cym', clips: [...[17, 21, 25, 29, 39, 47, 55, 67, 71, 75, 79.25, 82.2, 83, 85, 86, 87].map(b => [b, b + 1]), [83, 83.2, 'glow']], notes: [[0, 0.5, 12]] },
  { name: 'Snare', color: 'steel', label: 'Snare', clips: [[15, 26], [45, 56], [70.5, 71, 'bare'], [75, 86]], notes: [[1.5, 2.1, 12], [5.5, 6, 12], [9.5, 10, 12]] },
  { name: 'Glock', color: 'gold', stripName: '1-2', label: 'Glock', clips: [[59, 63], [63, 67], [71, 75], [87, 92.8]], notes: [[2.4, 3.9, 10, 3]] },
  { name: 'Harp', color: 'gold', label: 'Harp', clips: [[9, 11], [39, 41]], notes: [] }
];

const DASH = { 1: '4 2 2 2', 2: '2 3', 3: '5 2 2 3', 4: '2 14', 5: '2 21 1 17' };
const HI = { tan: '#e3cfa6', blue: '#5cbcf8' };

function clipHtml(t, [s, e, flag]) {
  const len = e - s, p = PALETTE[t.color];
  const stroke = ['tan', 'mauve', 'gold'].includes(t.color) ? '#444448' : '#ccd3d8';
  const notes = flag === 'roll' ? [[2, 2.5, 12], [3, 4, 12]] : flag === 'glow' ? [] : t.notes;
  const paths = notes.filter(n => n[0] < len).map(([a, b, y, d]) =>
    `<path d="M${a * 16} ${y + 0.5}H${Math.min(b, len) * 16}" stroke="${stroke}"${d ? ` stroke-dasharray="${DASH[d]}"` : ''}/>`).join('');
  const text = t.label === 'Violins II' && flag === 'hi' ? 'Violins II &nbsp;.ins' : t.label;
  const label = flag === 'bare' || flag === 'glow' ? '' : `<span class="lab">${text}</span>`;
  const fill = flag === 'hi' ? HI[t.color] : p.c;
  return `<div class="clip${len <= 2 ? ' short' : ''}${flag === 'glow' ? ' glow' : ''}" style="left:${pct(s - 1)};width:${pct(len)};--c:${fill};--d:${p.d}">` +
    `<svg viewBox="0 0 ${len * 16} 22" preserveAspectRatio="none">${paths}</svg>${label}</div>`;
}

let ruler = `<div class="loop" style="width:${pct(92)}"></div>`;
let lanes = `<div class="after" style="left:${pct(92)}"></div>`;
for (let b = 1; b < BARS; b += 2) {
  const major = b % 4 === 1;
  ruler += `<div class="tick${major ? ' major' : ''}" style="left:${pct(b - 1)}">${major ? `<span>${b}</span>` : ''}</div>`;
  lanes += `<div class="gline" style="left:${pct(b - 1)}"></div>`;
}
document.getElementById('ruler').innerHTML = ruler;
document.getElementById('lanes').innerHTML = lanes + TRACKS.map(t => `<div class="lane">${t.clips.map(c => clipHtml(t, c)).join('')}</div>`).join('') + '<div class="lane"></div>';

document.getElementById('tracks').innerHTML = TRACKS.map((t, i) => `
  <div class="track"><div class="chip" style="--c:${PALETTE[t.strip || t.color].c}"><i></i><span>${icon('zig', 9, 6)}</span></div>
  <b>${i + 1}</b>
  <div class="track-buttons"><button>M</button><button>S</button><button aria-label="Record">${icon('dot', 7, 7)}</button><button aria-label="Monitor">${icon('monitor', 8, 7)}</button></div>
  <span class="name">${t.name}</span>${icon('keys', 11, 7)}<span class="edge"></span></div>`).join('');

/* number, level, pan, fader travel, send level (0 = none), sends on, lit layers */
const CHANNELS = [
  [1, '-5.2', 0, 57, 17, 1, 2], [2, '+0.5', 3, 69, 21, 1, 2], [3, '-0.1', 6, 68, 14, 0, 2], [4, '-1.7', 68, 65, 17, 1, 2],
  [5, '-17.9', -59, 39, 10, 1, 2], [6, '-9.6', 70, 48, 0, 0, 0], [7, '-7.6', 35, 52, 21, 1, 2], [8, '-2.2', 0, 63, 20, 1, 2],
  [9, '-4.8', -21, 58, 24, 1, 2], [10, '-2.9', -41, 62, 24, 0, 2], [11, '-1.5', 49, 65, 22, 1, 2], [12, '-7.2', 0, 53, 36, 0, 2],
  [13, '-11.5', 0, 46, 0, 0, 0], [14, '-10.2', -3, 47, 34, 1, 3], [15, '-4.2', 0, 59, 0, 0, 0], [16, '-4.9', 0, 58, 21, 1, 2],
  [17, '-6.3', -59, 55, 0, 0, 0], [18, '-19.7', 29, 37, 11, 1, 2], [19, '-10.2', 0, 47, 0, 0, 0], [21, '0dB', 0, 68, 0, 0, 1]
];

const vars = p => `--c:${p.c};--bg:${p.bg}${p.n ? `;--n:${p.n}` : ''}${p.t ? `;--t:${p.t}` : ''}`;
const head = (text, on, menu = true) => `<div class="rowh">${icon('power', 11, 12, 'pw' + (on ? ' on' : ''))}<span>${text}</span>${menu ? icon('down', 7, 5, 'dn') : ''}${icon('plus', 9, 9, 'pl' + (menu ? '' : ' only'))}</div>`;
const slot = (text, on = true) => `<div class="slot">${icon('power', 11, 11, 'pw' + (on ? ' on' : ''))}<span>${text}</span>${icon('down', 7, 5, 'dn')}</div>`;

function panSvg(p) {
  const m = 35 + p * 0.33;
  const wedge = Math.abs(p) > 10 ? `<path d="M35 0H${m}V16H35z" fill="#1e5381"/><path d="M35 16L${m} 7V16z" fill="#2c79ba"/>` : '';
  return `<svg width="71" height="16" viewBox="0 0 71 16">${wedge}<path d="M${Math.round(m) - 1} 0h3v16h-3z" fill="#3fa2ea"/></svg>`;
}
function layers(lit) {
  const row = (i, on) => `<path d="M0 ${i * 4 + 1}h12v3H0z" fill="${on ? '#79c3ef' : '#8886'}"/>`;
  return `<svg width="12" height="13" viewBox="0 0 12 13"><path d="M0 0h12v13H0z" fill="#0002"/>${row(0, lit & 1)}${row(1, lit & 2)}${row(2, false)}</svg>`;
}
function meter(ticks, zero, extra = '') {
  return `<svg width="13" height="127" viewBox="0 0 13 127"><path d="M0 12h13v115H0z" fill="#2a2827"/>${ticks.map(y => `<path d="M2 ${y}.5h9" stroke="${y === zero ? '#aaa' : '#24506c'}"/>`).join('')}${extra}</svg>`;
}
function slider(value, name, blue) {
  const mid = 90 - value + 18;
  const ticks = [27, 40, 63, 75, 88, 96, 103].map(y => `<path d="M3 ${y}.5h12" stroke="#fff" stroke-opacity="${y === 40 ? 0.6 : 0.25}"/>`).join('');
  return `<div class="slider${blue ? ' blue' : ''}"><svg width="18" height="127" viewBox="0 0 18 127"><path d="M2 ${mid}h14V127H2z" fill="#fff" fill-opacity=".2"/>${ticks}<path d="M8 16h2v94H8z" fill="#222"/></svg><input type="range" min="0" max="90" value="${value}" aria-label="${name} level"></div>`;
}
const scale = list => `<div class="scale">${list.map(v => `<span>${v}</span>`).join('')}</div>`;
const panText = p => p === 0 ? '&lt;C&gt;' : (p > 0 ? 'R' : 'L') + Math.abs(p);

document.getElementById('strips').innerHTML = CHANNELS.map(([num, db, pan, pos, send, on, lit], i) => {
  const fx = num === 21, t = TRACKS[i];
  const p = fx ? PALETTE.fx : PALETTE[t.strip || t.color];
  const name = fx ? 'ReverbBus' : t.stripName || t.name;
  const insert = fx ? 'Open AIR' : num === 14 ? 'X-Trem' : '';
  const sends = send ? `<div class="bus">${slot('ReverbBus', on)}<span class="sb"></span></div><div class="lev"><span class="bar"><span style="width:${send}px"></span></span>${icon('send', 10, 7)}</div>` : '';
  return `<div class="strip" style="${vars(p)}"><div class="cap"></div>
    <div class="ins${fx ? ' full' : ''}">${head('Inserts', insert)}${insert ? slot(insert) : ''}</div>
    ${fx ? '' : `<div class="snd">${head('Sends', on, false)}${sends}</div>`}<div class="cap"></div>
    <div class="low"><div class="pan">${panSvg(pan)}</div><div class="vals"><span>${db}</span><span>${panText(pan)}</span></div>
    <div class="btns${fx ? ' solo' : ''}"><button>M</button><button class="${fx ? 'green' : ''}">S</button>${fx ? '' : `<button aria-label="Record">${icon('dot', 10, 10)}</button><button aria-label="Monitor">${icon('monitor', 10, 10)}</button>`}</div>
    <div class="fader">${scale([10, 6, 0, -6, -12, -24, -36, -48])}${meter([14, 24, 40, 55, 68, 84, 100, 110, 118], 40, '<path d="M0 0h13v11H0z" fill="#0004"/>')}${slider(pos, name, fx)}<div class="aside">${layers(lit)}${icon('knob', 13, 13)}</div></div>
    <div class="num"><b>${num}</b>${fx ? '<b class="fx">FX</b>' : icon('keys', 17, 10)}</div><button class="auto">Auto: Off</button></div>
    <div class="sname">${name}</div></div>`;
}).join('');

document.getElementById('mainout').innerHTML = `<div class="strip" style="${vars(PALETTE.fx)}"><div class="cap"></div>
  <div class="ins full"><div class="mixfx"><span>Mix FX</span>${icon('down', 7, 5)}</div>${head('Inserts', true)}${slot('Mixtool')}${head('Post', false)}</div><div class="cap"></div>
  <div class="low"><div class="pan"><span>-∞</span><span>-∞</span></div><div class="vals"><span>0dB</span><span class="dim">0</span></div>
  <div class="btns"><button>M</button><button>S</button><div class="trio"><button class="metro" aria-label="Metronome">${icon('metro', 13, 12)}</button><button aria-label="Level"><svg width="6" height="12" viewBox="0 0 6 12"><path d="M2 0h2v2h2v3H0V2h2zM0 6h6v3H4v3H2V9H0z" fill="#aaa"/></svg></button><button aria-label="Mono">${icon('stereo', 16, 10)}</button></div></div>
  <div class="fader"><div class="aside">${layers(1)}${icon('knob', 13, 13)}</div>${slider(68, 'Main', true)}${meter([14, 24, 34, 43, 63, 83, 102, 122], 24, '<path d="M11 24h2v102h-2z" fill="#d8b63a"/>')}${scale([6, 0, -6, -12, -24, -36, -48, -60])}</div>
  <div class="num"></div><button class="auto">Auto: Off</button></div><div class="sname">Main</div></div>`;
```
